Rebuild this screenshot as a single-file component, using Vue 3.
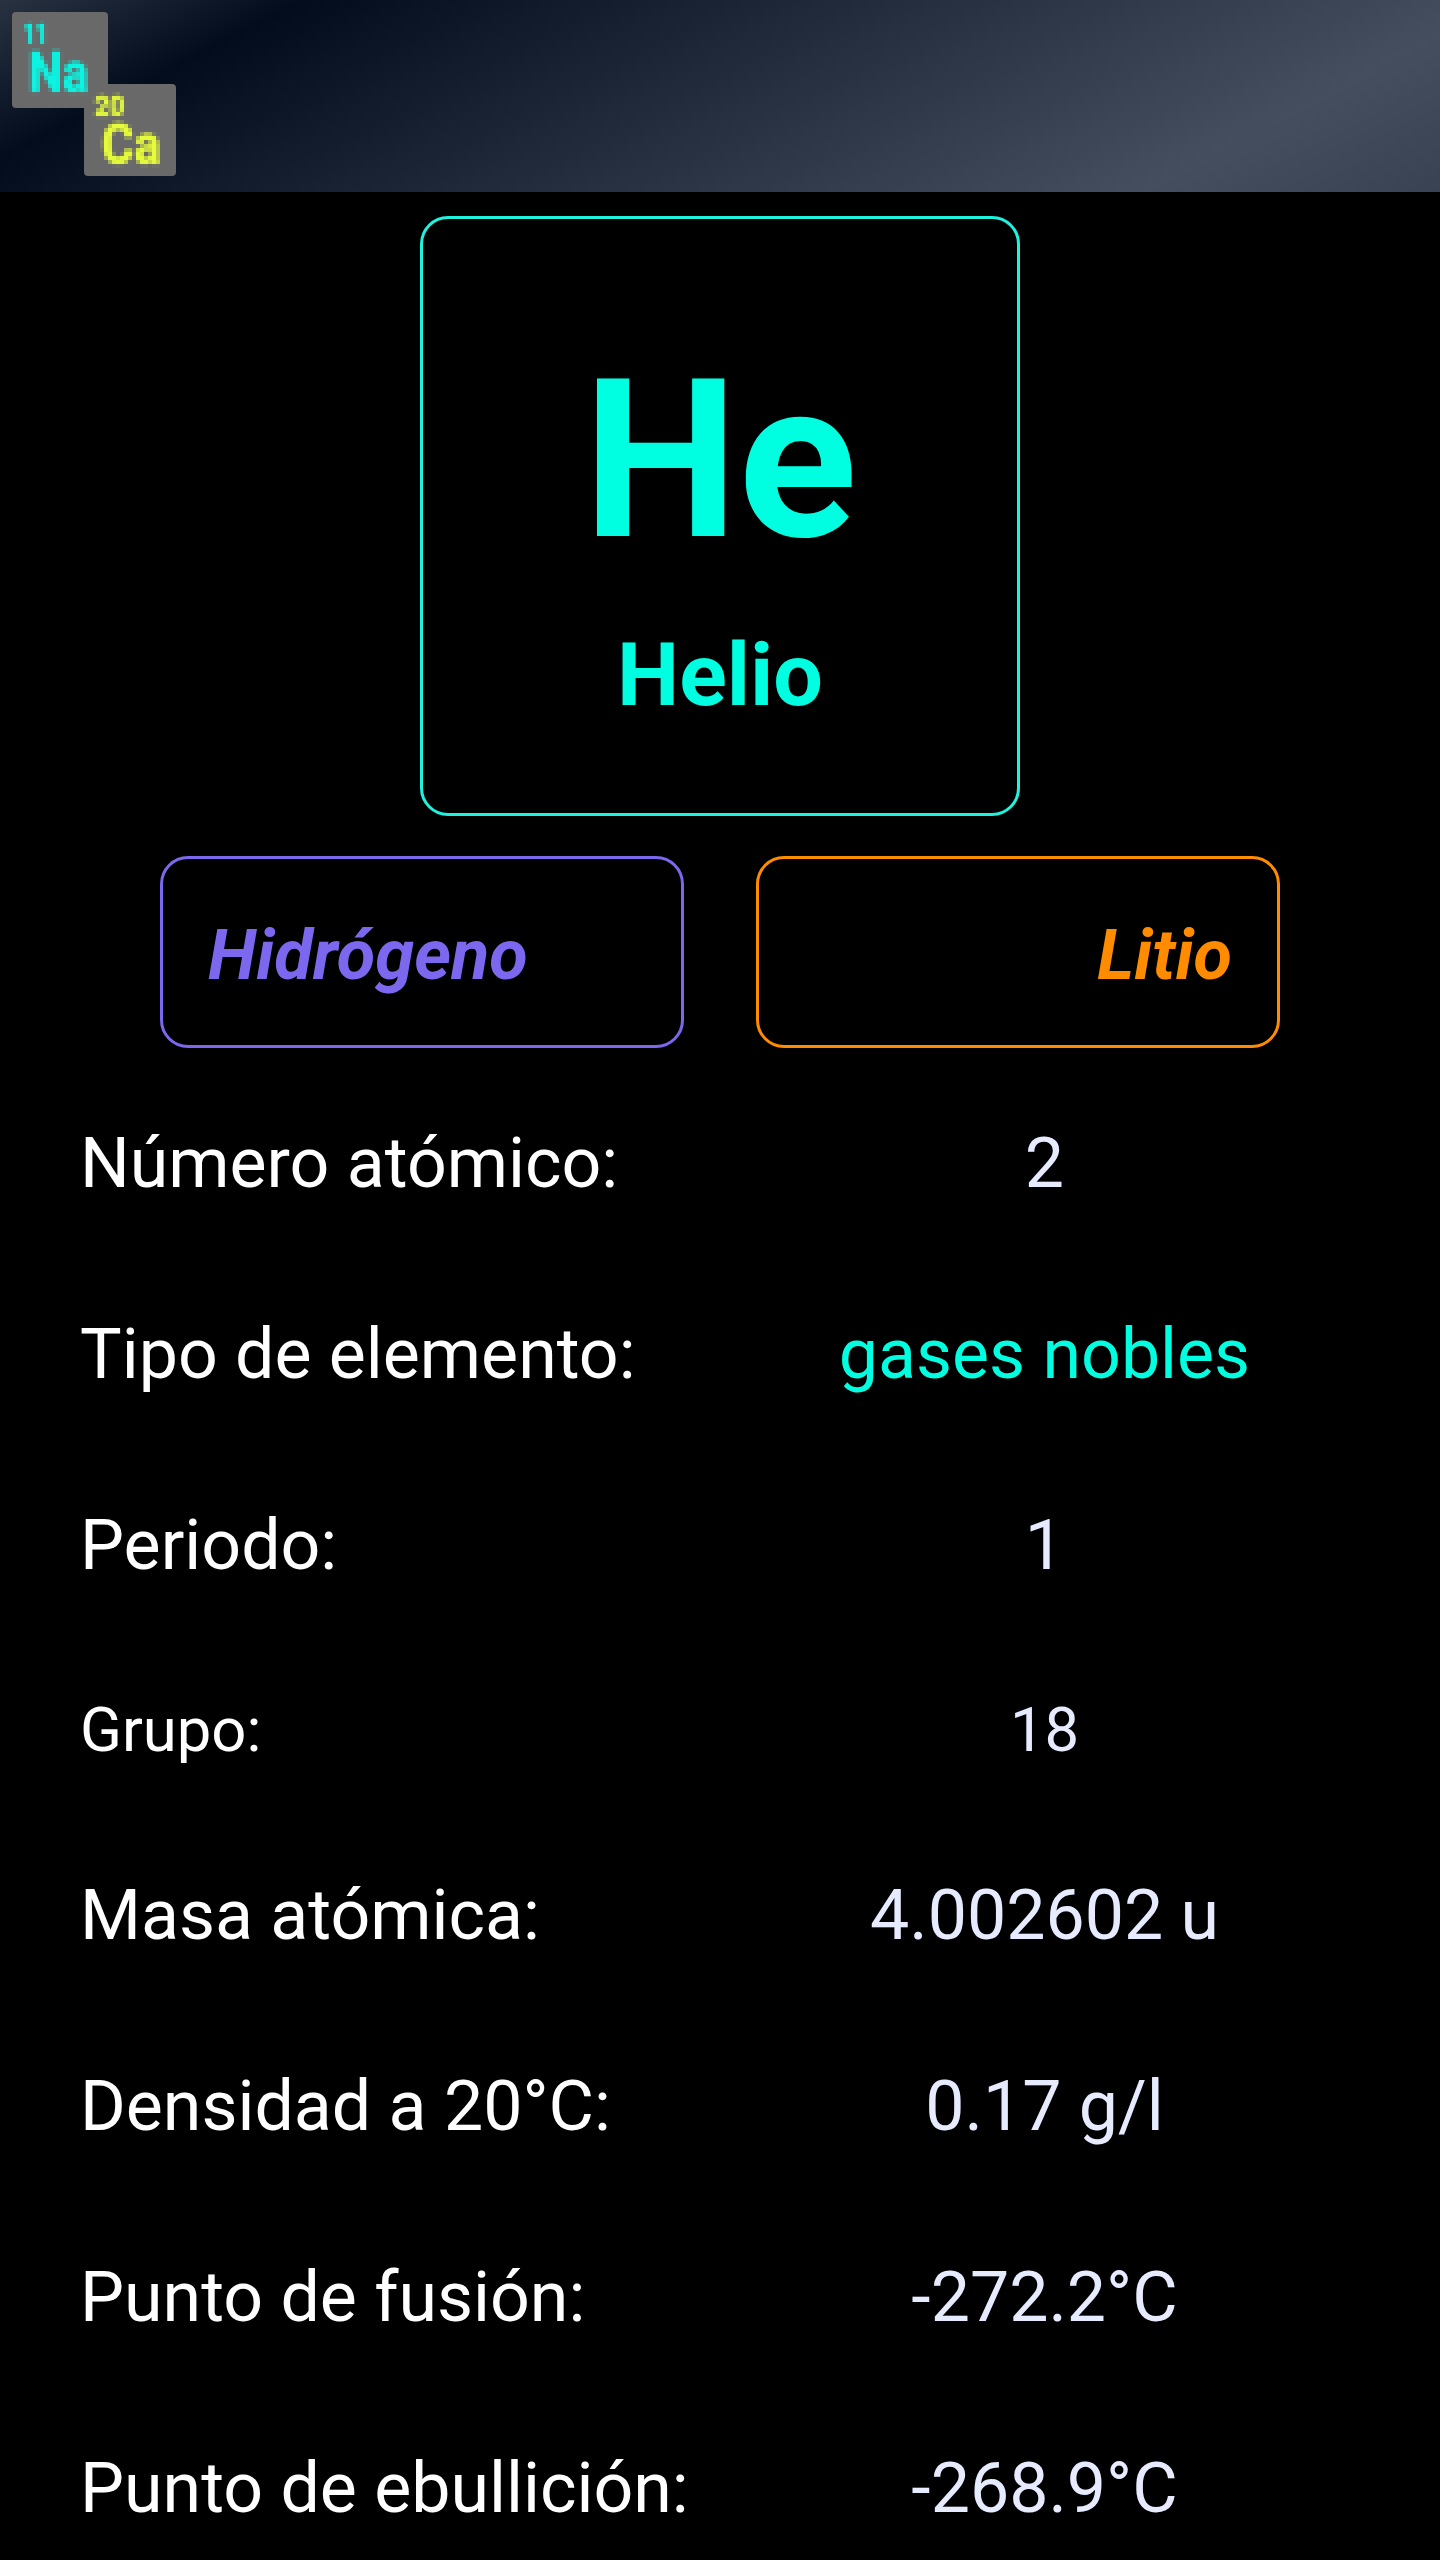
<script setup>
const logo = [
  { number: '11', symbol: 'Na', tone: 'aqua' },
  { number: '20', symbol: 'Ca', tone: 'lime' },
]

const properties = [
  { label: 'Número atómico:', value: '2' },
  { label: 'Tipo de elemento:', value: 'gases nobles', tone: 'noble' },
  { label: 'Periodo:', value: '1' },
  { label: 'Grupo:', value: '18', size: 'small' },
  { label: 'Masa atómica:', value: '4.002602 u' },
  { label: 'Densidad a 20°C:', value: '0.17 g/l' },
  { label: 'Punto de fusión:', value: '-272.2°C' },
  { label: 'Punto de ebullición:', value: '-268.9°C' },
]
</script>

<template>
  <div class="page">
    <header class="topbar">
      <svg class="logo" viewBox="0 0 192 192" aria-label="Tabla periódica">
        <defs>
          <!-- Samples the lettering every 4px and fills each cell with that sample -->
          <filter id="pixels" filterUnits="userSpaceOnUse" primitiveUnits="userSpaceOnUse" x="0" y="0" width="192" height="192" color-interpolation-filters="sRGB">
            <feGaussianBlur in="SourceGraphic" stdDeviation="0.8" />
            <feOffset dx="-2" dy="-2" result="source" />
            <feFlood x="0" y="0" width="1" height="1" flood-color="#000" result="dot" />
            <feComposite in="dot" in2="dot" operator="over" x="0" y="0" width="4" height="4" />
            <feTile result="grid" />
            <feComposite in="source" in2="grid" operator="in" result="s" />
            <feOffset in="s" dx="1" dy="0" result="sx" />
            <feMerge result="a"><feMergeNode in="s" /><feMergeNode in="sx" /></feMerge>
            <feOffset in="a" dx="2" dy="0" result="ax" />
            <feMerge result="b"><feMergeNode in="a" /><feMergeNode in="ax" /></feMerge>
            <feOffset in="b" dx="0" dy="1" result="by" />
            <feMerge result="c"><feMergeNode in="b" /><feMergeNode in="by" /></feMerge>
            <feOffset in="c" dx="0" dy="2" result="cy" />
            <feMerge><feMergeNode in="c" /><feMergeNode in="cy" /></feMerge>
          </filter>
        </defs>
        <rect x="12" y="12" width="96" height="96" rx="4" fill="#696969" />
        <rect x="84" y="84" width="92" height="92" rx="4" fill="#696969" />
        <g filter="url(#pixels)">
          <g :class="logo[0].tone">
            <text x="24" y="44" font-size="28" textLength="24" lengthAdjust="spacingAndGlyphs">{{ logo[0].number }}</text>
            <text x="29" y="92" font-size="56" textLength="60" lengthAdjust="spacingAndGlyphs">{{ logo[0].symbol }}</text>
          </g>
          <g :class="logo[1].tone">
            <text x="95" y="116" font-size="28" textLength="30" lengthAdjust="spacingAndGlyphs">{{ logo[1].number }}</text>
            <text x="102" y="164" font-size="56" textLength="59" lengthAdjust="spacingAndGlyphs">{{ logo[1].symbol }}</text>
          </g>
        </g>
      </svg>
    </header>

    <main>
      <section class="element">
        <h1 class="symbol">He</h1>
        <h2 class="name">Helio</h2>
      </section>

      <nav class="neighbours">
        <a class="neighbour previous">Hidrógeno</a>
        <a class="neighbour next">Litio</a>
      </nav>

      <dl class="properties">
        <div v-for="item in properties" :key="item.label" class="row" :class="item.size">
          <dt>{{ item.label }}</dt>
          <dd :class="item.tone">{{ item.value }}</dd>
        </div>
      </dl>
    </main>
  </div>
</template>

<style>
body {
  margin: 0;
  background: #000;
}
</style>

<style scoped>
.page {
  width: 1440px;
  height: 2560px;
  overflow: hidden;
  background: #000;
  color: #fff;
  font-family: Roboto, "Liberation Sans", sans-serif;
}

.topbar {
  height: 192px;
  background: linear-gradient(152.3deg, #283241 0%, #020c1c 16.8%, #454e5e 83.2%, #384252 100%);
}

.logo {
  display: block;
  width: 192px;
  height: 192px;
  font-weight: 700;
}

.aqua {
  fill: #0cf4e2;
  stroke: #0cf4e2;
}

.lime {
  fill: #e6fc3a;
  stroke: #e6fc3a;
}

.element {
  box-sizing: border-box;
  width: 600px;
  height: 600px;
  margin: 24px auto 40px;
  padding-top: 113px;
  border: 3px solid #1ff2de;
  border-radius: 28px;
  color: #00ffe1;
  text-align: center;
}

.symbol {
  margin: 0;
  font-size: 220px;
  line-height: 258px;
  font-weight: 700;
}

.name {
  margin: 33px 0 0;
  font-size: 88px;
  line-height: 104px;
  font-weight: 700;
}

.neighbours {
  display: flex;
  justify-content: center;
  gap: 72px;
}

.neighbour {
  box-sizing: border-box;
  width: 524px;
  height: 192px;
  padding: 0 45px;
  border: 3px solid;
  border-radius: 28px;
  font-size: 70.4px;
  line-height: 192px;
  font-weight: 700;
  font-style: italic;
}

.previous {
  color: #7b68ee;
}

.next {
  color: #ff8c00;
  text-align: right;
}

.properties {
  margin: 20px 80px 0;
}

.row {
  display: flex;
  height: 191px;
  font-size: 69.85px;
  line-height: 191px;
}

.row.small {
  height: 179px;
  font-size: 61.6px;
  line-height: 178px;
}

dt {
  width: 649px;
  white-space: nowrap;
}

dd {
  flex: 1;
  margin: 0;
  color: #e6ebff;
  text-align: center;
}

dd.noble {
  color: #00ffe1;
}
</style>
